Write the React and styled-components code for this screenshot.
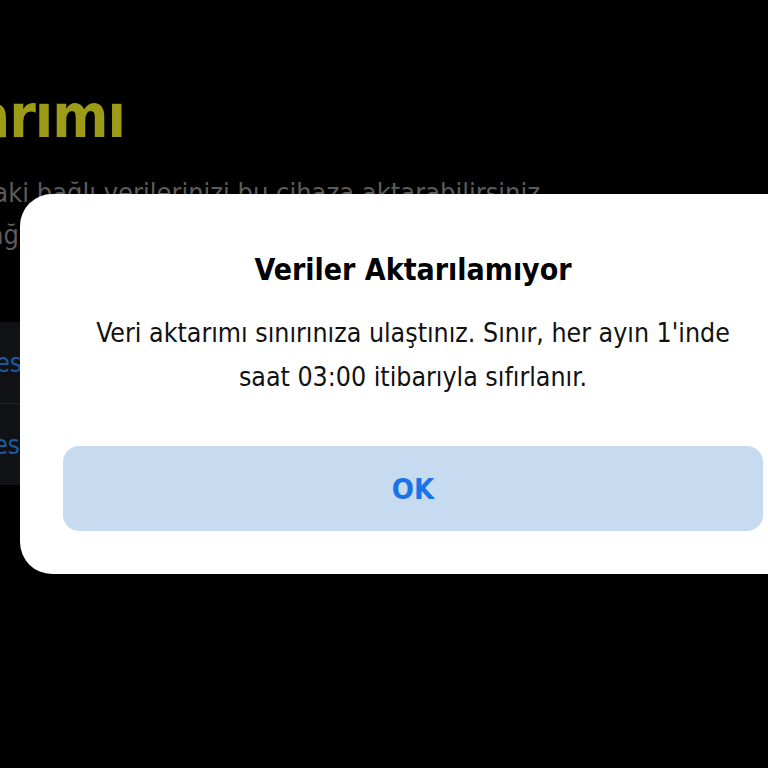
import React from "react";
import styled, { createGlobalStyle } from "styled-components";

const GlobalStyle = createGlobalStyle`
  html, body {
    margin: 0;
    padding: 0;
    background: #000;
  }
  body {
    font-family: "DejaVu Sans Condensed", "DejaVu Sans", sans-serif;
  }
`;

function App() {
  return (
    <>
      <GlobalStyle />
      <Screen>
        <Background>
          <Line end={125}>
            <PageTitle>Veri aktarımı</PageTitle>
          </Line>
          <Subtitle>
            <Line end={540}>
              <SubtitleText>Eski telefonunuzdaki bağlı verilerinizi bu cihaza aktarabilirsiniz</SubtitleText>
            </Line>
            <Line end={19}>
              <SubtitleText>Hesabınıza bağ</SubtitleText>
            </Line>
          </Subtitle>
          <DeviceList>
            <DeviceRow>
              <Line end={22}>
                <RowText>Cihaz seçes</RowText>
              </Line>
            </DeviceRow>
            <DeviceRow>
              <Line end={20}>
                <RowText>Cihaz seçes</RowText>
              </Line>
            </DeviceRow>
          </DeviceList>
        </Background>

        <Dialog>
          <DialogTitle>Veriler Aktarılamıyor</DialogTitle>
          <DialogText>
            Veri aktarımı sınırınıza ulaştınız. Sınır, her ayın 1'inde
            <br />
            saat 03:00 itibarıyla sıfırlanır.
          </DialogText>
          <OkButton>OK</OkButton>
        </Dialog>
      </Screen>
    </>
  );
}

const Screen = styled.div`
  position: relative;
  width: 768px;
  height: 768px;
  overflow: hidden;
  background: #000;
`;

const Background = styled.div`
  padding-top: 80px;
  display: flex;
  flex-direction: column;
`;

/* right-aligned line whose text runs off the left edge of the screen */
const Line = styled.div`
  display: flex;
  justify-content: flex-end;
  width: ${(p) => p.end}px;
  white-space: nowrap;
`;

const PageTitle = styled.h1`
  margin: 0;
  font-size: 60px;
  line-height: 72px;
  font-weight: 700;
  color: #9c9c18;
  letter-spacing: -1px;
`;

const Subtitle = styled.div`
  margin-top: 20px;
  display: flex;
  flex-direction: column;
`;

const SubtitleText = styled.span`
  font-size: 27px;
  line-height: 42px;
  color: #5c5c5c;
`;

const DeviceList = styled.div`
  margin-top: 66px;
  background: #101215;
  display: flex;
  flex-direction: column;
`;

const DeviceRow = styled.div`
  height: 81px;
  display: flex;
  align-items: center;
  & + & {
    border-top: 1px solid #1e2024;
  }
`;

const RowText = styled.span`
  font-size: 26px;
  color: #1b5aa0;
`;

const Dialog = styled.div`
  position: absolute;
  left: 20px;
  top: 194px;
  width: 786px;
  box-sizing: border-box;
  padding: 56px 43px 43px;
  background: #fff;
  border-radius: 32px;
  display: flex;
  flex-direction: column;
  align-items: center;
`;

const DialogTitle = styled.h2`
  margin: 0;
  font-size: 30px;
  line-height: 40px;
  font-weight: 700;
  color: #000;
`;

const DialogText = styled.p`
  margin: 21px 0 0;
  font-size: 26.5px;
  line-height: 44px;
  text-align: center;
  color: #111;
`;

const OkButton = styled.button`
  margin-top: 47px;
  width: 100%;
  height: 85px;
  border: none;
  border-radius: 16px;
  background: #c6dbef;
  color: #1a73e8;
  font-family: inherit;
  font-size: 29px;
  font-weight: 700;
  cursor: pointer;
`;

export default App;
